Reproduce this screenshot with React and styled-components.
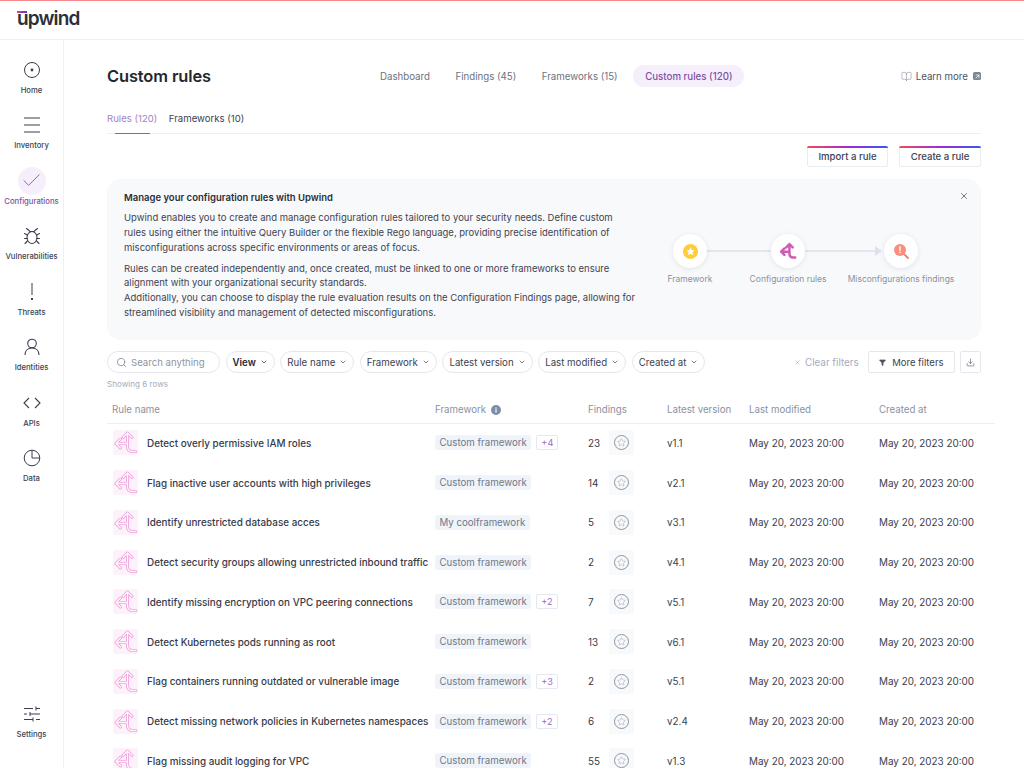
import React from "react";
import styled, { createGlobalStyle } from "styled-components";
import { ChevronDown, Search, X, Star, Filter, Download, BookOpen, ArrowUpRight, Check } from "lucide-react";

const Global = createGlobalStyle`
  html, body { margin: 0; height: 100%; overflow: hidden; background: #fff; }
  body { font-family: Inter, "Liberation Sans", sans-serif; color: #2f3441; -webkit-font-smoothing: antialiased; }
  * { box-sizing: border-box; }
`;
const Page = styled.div`display:flex;flex-direction:column;height:768px;width:1024px;overflow:hidden;`;
const TopBar = styled.header`
  height:40px;flex:none;padding:8px 0 0 17px;border-bottom:1px solid #eef0f5;
  border-top:1px solid #f58a8c;
`;
const Logo = styled.div`position:relative;display:inline-block;font-size:19px;line-height:20px;font-weight:600;letter-spacing:-.85px;color:#2a2f3a;
  &::before{content:"";position:absolute;left:0;top:2px;width:10px;height:2px;background:linear-gradient(90deg,#f0405c,#5a30e0);}
`;
const Body = styled.div`display:flex;flex:1;min-height:0;`;
const Side = styled.nav`width:64px;flex:none;border-right:1px solid #eef1f8;display:flex;flex-direction:column;align-items:center;padding-top:16px;padding-bottom:13px;`;
const NavList = styled.div`display:flex;flex-direction:column;flex:1;width:100%;`;
const NavItem = styled.div`height:55.43px;display:flex;flex-direction:column;align-items:center;color:${p=>p.$active?"#7d4fa6":"#3d4352"};`;
const NavIcon = styled.div`width:28px;height:28px;border-radius:50%;display:flex;align-items:center;justify-content:center;background:${p=>p.$active?"#f5effc":"transparent"};color:${p=>p.$active?"#8a62b4":"#3a3f4c"};`;
const NavLabel = styled.span`font-size:7.7px;line-height:12px;margin-top:1px;font-weight:500;white-space:nowrap;`;
const Main = styled.main`flex:1;min-width:0;padding:0 43px;`;
const Head = styled.div`display:flex;align-items:center;height:22px;margin-top:25px;`;
const Title = styled.h1`margin:0;width:261px;font-size:16.4px;line-height:22px;font-weight:600;color:#23272f;letter-spacing:-.1px;`;
const TopTabs = styled.div`display:flex;align-items:center;gap:1.5px;flex:1;`;
const TopTab = styled.div`font-size:9.7px;height:22px;line-height:23px;padding:0 12px;border-radius:11px;white-space:nowrap;font-weight:${p=>p.$active?500:400};color:${p=>p.$active?"#7d4fa6":"#6c7280"};background:${p=>p.$active?"#f5effc":"transparent"};${p=>p.$active?"margin-left:2px;":""}`;
const Learn = styled.div`display:flex;align-items:center;gap:4px;font-size:9.7px;color:#4d5360;`;
const SubIcon = styled.span`display:inline-flex;width:8px;height:8px;background:#7f8795;border-radius:1.5px;color:#fff;align-items:center;justify-content:center;margin-left:1px;`;
const SubTabs = styled.div`display:flex;gap:11.5px;height:28px;margin-top:19px;border-bottom:1px solid #eceef3;`;
const SubTab = styled.div`position:relative;font-size:9.6px;padding:7px 0 0;white-space:nowrap;color:${p=>p.$active?"#a384c6":"#3c4150"};
  ${p=>p.$active?`&::after{content:"";position:absolute;left:8px;right:7px;bottom:-1px;height:1px;background:#8a62b4;}`:""}
`;
const Actions = styled.div`display:flex;justify-content:flex-end;gap:11px;margin-top:12px;height:21px;`;
const GradBtn = styled.button`font:500 9.6px Inter,sans-serif;color:#3c4150;background:#fff;height:21px;width:${p=>p.$w}px;padding:0;border:1px solid #e9ecf2;border-top:0;border-radius:3px;position:relative;
  &::before{content:"";position:absolute;left:-1px;right:-1px;top:0;height:1.5px;border-radius:2px 2px 0 0;background:linear-gradient(90deg,#f24b57,#a02ad8,#2f5cf0);}
`;
const Banner = styled.section`position:relative;display:flex;margin-top:12px;height:161px;background:#f8f9fb;border-radius:14px;padding:12px 0 0 17px;`;
const BannerText = styled.div`width:510px;font-size:9.5px;line-height:14.85px;color:#3f4452;`;
const BannerTitle = styled.div`font-weight:600;color:#2a2e38;height:20px;line-height:13px;`;
const Para = styled.p`margin:0 0 6px;white-space:nowrap;`;
const Close = styled.span`position:absolute;right:12px;top:12px;color:#5a6270;display:flex;`;
const Flow = styled.div`position:absolute;left:560px;top:55px;width:296px;height:50px;`;
const FlowLine = styled.div`position:absolute;top:16px;left:${p=>p.$l}px;width:${p=>p.$w}px;height:2px;background:#e2e7ee;`;
const FlowArrow = styled.div`position:absolute;left:208px;top:12px;border-left:7px solid #dbe2ec;border-top:5px solid transparent;border-bottom:5px solid transparent;`;
const FlowNode = styled.div`position:absolute;left:${p=>p.$x}px;top:0;width:0;display:flex;flex-direction:column;align-items:center;`;
const FlowCircle = styled.div`width:34px;height:34px;flex:none;border-radius:50%;background:#fff;box-shadow:0 1px 5px rgba(90,100,130,.15);display:flex;align-items:center;justify-content:center;`;
const FlowLabel = styled.div`margin-top:5px;font-size:8.5px;line-height:12px;color:#8b92a0;white-space:nowrap;`;
const Filters = styled.div`display:flex;align-items:center;gap:5.5px;margin-top:11px;height:22px;`;
const Pill = styled.div`display:flex;align-items:center;height:22px;padding:0 6px;gap:4px;border:1px solid #e4e7ee;border-radius:11px;font-size:9.7px;color:${p=>p.$bold?"#23272f":"#3c4150"};font-weight:${p=>p.$bold?600:400};white-space:nowrap;background:#fff;`;
const SearchBox = styled(Pill)`width:113px;padding:0 8px;gap:4px;font-size:9.6px;color:#8d94a2;`;
const Spacer = styled.div`flex:1;`;
const Clear = styled.div`display:flex;align-items:center;gap:4px;font-size:9.85px;color:#a3adbf;margin-right:4px;`;
const Square = styled.div`display:flex;align-items:center;justify-content:center;gap:6px;height:22px;padding:0 ${p=>p.$icon?"0":"10px"};width:${p=>p.$icon?"21px":"auto"};border:1px solid #e4e7ee;border-radius:2px;font-size:9.5px;color:#3c4150;white-space:nowrap;`;
const Showing = styled.div`font-size:8.1px;color:#a3adbf;margin-top:5px;line-height:12px;`;
const Table = styled.div`margin-top:6px;width:888px;`;
const Row = styled.div`display:grid;grid-template-columns:328px 153px 79px 82px 130px 116px;align-items:center;height:39.75px;padding-bottom:2px;`;
const HeadRow = styled(Row)`height:28px;border-bottom:1px solid #edeff4;padding-bottom:0;font-size:9.7px;color:#8b92a0;`;
const HeadFirst = styled.div`padding-left:5px;`;
const HeadCell = styled.div`display:flex;align-items:center;gap:5px;`;
const NameCell = styled.div`display:flex;align-items:center;gap:9px;padding-left:6px;font-size:9.9px;font-weight:500;color:#363b48;white-space:nowrap;`;
const RuleBox = styled.div`width:25px;height:25px;background:#fdf1fa;border-radius:2px;display:flex;flex:none;`;
const FrameCell = styled.div`display:flex;align-items:center;gap:5px;`;
const Tag = styled.span`font-size:9.7px;line-height:15px;padding:0 4.5px;background:#eff3fa;border-radius:3px;color:#6f7888;white-space:nowrap;`;
const More = styled.span`font-size:9.2px;line-height:13px;padding:0 4px;border:1px solid #e6e8ef;border-radius:2px;color:#9a6cc0;`;
const FindCell = styled.div`display:flex;align-items:center;font-size:9.9px;color:#363b48;`;
const Num = styled.span`width:21px;`;
const StarBox = styled.div`width:25px;height:25px;background:#f8f9fb;border-radius:2px;display:flex;align-items:center;justify-content:center;`;
const StarRing = styled.div`width:15px;height:15px;border:1px solid #8b93a2;border-radius:50%;display:flex;align-items:center;justify-content:center;color:#8b93a2;`;
const Cell = styled.div`font-size:9.9px;color:#3c4150;white-space:nowrap;`;

const ruleD = "M14.500 3V16c0 3.500 2 5.500 5 5.500h3M14.500 13.500H3M7.500 9l-4.500 4.500 4.500 4.500M10 7.500l4.500-4.500 4.500 4.500";
const RuleIcon = () => (
  <svg width="25" height="25" viewBox="0 0 25 25" fill="none" strokeLinejoin="round" strokeLinecap="round">
    <path d={ruleD} stroke="#f2a0dc" strokeWidth="3"/>
    <path d={ruleD} stroke="#fef7fc" strokeWidth="1.300"/>
  </svg>
);
const SolidRule = () => (
  <svg width="18" height="18" viewBox="0 0 25 25" fill="none" stroke="#d05bb5" strokeWidth="3.400" strokeLinejoin="round" strokeLinecap="round">
    <path d={ruleD}/>
  </svg>
);
const StarCoin = () => (
  <svg width="15" height="15" viewBox="0 0 16 16"><circle cx="8" cy="8" r="8" fill="#ffcd38"/><path d="M8 3.800l1.300 2.700 3 .4-2.200 2 .6 3L8 10.400l-2.700 1.500.6-3-2.200-2 3-.4z" fill="#fff"/></svg>
);
const Magnifier = () => (
  <svg width="17" height="17" viewBox="0 0 17 17"><path d="M10.500 10.500l4.500 4.500" stroke="#f0806c" strokeWidth="1.800" strokeLinecap="round"/><circle cx="7" cy="7" r="6" fill="#fa8e7e"/><rect x="6.300" y="3.300" width="1.400" height="4.400" fill="#fff"/><rect x="6.300" y="8.700" width="1.400" height="1.400" fill="#fff"/></svg>
);
const InfoDot = () => (<svg width="10" height="10" viewBox="0 0 10 10"><circle cx="5" cy="5" r="5" fill="#7f8ea8"/><rect x="4.400" y="4.300" width="1.200" height="3.200" fill="#fff"/><rect x="4.400" y="2.500" width="1.200" height="1.200" fill="#fff"/></svg>);
const Dot = () => (<svg width="18" height="18" viewBox="0 0 18 18" fill="none"><circle cx="9" cy="9" r="7.500" stroke="#3a3f4c" strokeWidth="1"/><circle cx="9" cy="9" r="1.400" fill="#3a3f4c"/></svg>);
const Lines = () => (<svg width="18" height="18" viewBox="0 0 18 18" stroke="#3a3f4c" strokeWidth="1"><path d="M1 2h16M1 9h16M1 16h16"/></svg>);
const BugIcon = () => (<svg width="18" height="18" viewBox="0 0 18 18" fill="none" stroke="#3a3f4c" strokeWidth="1.100" strokeLinecap="round"><ellipse cx="9" cy="10.500" rx="5" ry="6"/><path d="M3.500 1.500L7 4.500h4l3.500-3M4.200 8L1.500 6.500M4 11.500H1.500M4.500 14l-2.500 2.500M13.800 8l2.700-1.500M14 11.500h2.500M13.500 14l2.500 2.500"/></svg>);
const Bang = () => (<svg width="6" height="18" viewBox="0 0 6 18" fill="#3a3f4c"><rect x="2.500" y="0" width="1" height="12"/><rect x="2" y="15" width="2" height="2"/></svg>);
const Person = () => (<svg width="18" height="18" viewBox="0 0 18 18" fill="none" stroke="#3a3f4c" strokeWidth="1.100"><circle cx="9" cy="5.500" r="4.300"/><path d="M2 17c0-4.500 3-7 7-7s7 2.500 7 7"/></svg>);
const Code = () => (<svg width="18" height="12" viewBox="0 0 18 12" fill="none" stroke="#3a3f4c" strokeWidth="1.100"><path d="M6 1L1 6l5 5M12 1l5 5-5 5"/></svg>);
const Pie = () => (<svg width="18" height="18" viewBox="0 0 18 18" fill="none" stroke="#3a3f4c" strokeWidth="1"><circle cx="9" cy="9" r="7.800"/><path d="M9 1.200V9h7.800"/></svg>);
const Sliders = () => (<svg width="18" height="16" viewBox="0 0 18 16" fill="none" stroke="#3a3f4c" strokeWidth="1"><path d="M1 2.500h9M13 2.500h4M13 0.500v4M1 8h3M7 8h10M7 6v4M1 13.500h9M13 13.500h4M10 11.500v4"/></svg>);

const nav = [["Home",<Dot/>],["Inventory",<Lines/>],["Configurations",<Check size={23} strokeWidth={1} />,true],["Vulnerabilities",<BugIcon/>],["Threats",<Bang/>],["Identities",<Person/>],["APIs",<Code/>],["Data",<Pie/>]];
const rows = [
  ["Detect overly permissive IAM roles","Custom framework","+4","23","v1.1"],
  ["Flag inactive user accounts with high privileges","Custom framework","","14","v2.1"],
  ["Identify unrestricted database acces","My coolframework","","5","v3.1"],
  ["Detect security groups allowing unrestricted inbound traffic","Custom framework","","2","v4.1"],
  ["Identify missing encryption on VPC peering connections","Custom framework","+2","7","v5.1"],
  ["Detect Kubernetes pods running as root","Custom framework","","13","v6.1"],
  ["Flag containers running outdated or vulnerable image","Custom framework","+3","2","v5.1"],
  ["Detect missing network policies in Kubernetes namespaces","Custom framework","+2","6","v2.4"],
  ["Flag missing audit logging for VPC","Custom framework","","55","v1.3"],
];
const date = "May 20, 2023 20:00";

export default function App() {
  return (
    <Page>
      <Global />
      <TopBar><Logo>upwind</Logo></TopBar>
      <Body>
        <Side>
          <NavList>
            {nav.map(([l,i,a]) => (
              <NavItem key={l} $active={a}><NavIcon $active={a}>{i}</NavIcon><NavLabel>{l}</NavLabel></NavItem>
            ))}
          </NavList>
          <NavItem><NavIcon><Sliders/></NavIcon><NavLabel>Settings</NavLabel></NavItem>
        </Side>
        <Main>
          <Head>
            <Title>Custom rules</Title>
            <TopTabs>
              <TopTab>Dashboard</TopTab><TopTab>Findings (45)</TopTab><TopTab>Frameworks (15)</TopTab><TopTab $active>Custom rules (120)</TopTab>
            </TopTabs>
            <Learn><BookOpen size={11} strokeWidth={1.200} color="#7f8795"/>Learn more<SubIcon><ArrowUpRight size={7} strokeWidth={2.500}/></SubIcon></Learn>
          </Head>
          <SubTabs><SubTab $active>Rules (120)</SubTab><SubTab>Frameworks (10)</SubTab></SubTabs>
          <Actions><GradBtn $w={81}>Import a rule</GradBtn><GradBtn $w={82}>Create a rule</GradBtn></Actions>
          <Banner>
            <BannerText>
              <BannerTitle>Manage your configuration rules with Upwind</BannerTitle>
              <Para>Upwind enables you to create and manage configuration rules tailored to your security needs. Define custom<br/>rules using either the intuitive Query Builder or the flexible Rego language, providing precise identification of<br/>misconfigurations across specific environments or areas of focus.</Para>
              <Para>Rules can be created independently and, once created, must be linked to one or more frameworks to ensure<br/>alignment with your organizational security standards.<br/>Additionally, you can choose to display the rule evaluation results on the Configuration Findings page, allowing for<br/>streamlined visibility and management of detected misconfigurations.</Para>
            </BannerText>
            <Close><X size={10} strokeWidth={2}/></Close>
            <Flow>
              <FlowLine $l={40} $w={64}/><FlowLine $l={138} $w={70}/><FlowArrow/>
              <FlowNode $x={23}><FlowCircle><StarCoin/></FlowCircle><FlowLabel>Framework</FlowLabel></FlowNode>
              <FlowNode $x={121}><FlowCircle><SolidRule/></FlowCircle><FlowLabel>Configuration rules</FlowLabel></FlowNode>
              <FlowNode $x={234}><FlowCircle><Magnifier/></FlowCircle><FlowLabel>Misconfigurations findings</FlowLabel></FlowNode>
            </Flow>
          </Banner>
          <Filters>
            <SearchBox><Search size={11} strokeWidth={1.500} color="#6c7280"/>Search anything</SearchBox>
            <Pill $bold>View<ChevronDown size={8} strokeWidth={2}/></Pill>
            <Pill>Rule name<ChevronDown size={8} strokeWidth={2}/></Pill>
            <Pill>Framework<ChevronDown size={8} strokeWidth={2}/></Pill>
            <Pill>Latest version<ChevronDown size={8} strokeWidth={2}/></Pill>
            <Pill>Last modified<ChevronDown size={8} strokeWidth={2}/></Pill>
            <Pill>Created at<ChevronDown size={8} strokeWidth={2}/></Pill>
            <Spacer/>
            <Clear><X size={7} strokeWidth={2}/>Clear filters</Clear>
            <Square><Filter size={7} fill="#4d5360" color="#4d5360"/>More filters</Square>
            <Square $icon><Download size={9} strokeWidth={2} color="#6c7280"/></Square>
          </Filters>
          <Showing>Showing 6 rows</Showing>
          <Table>
            <HeadRow>
              <HeadFirst>Rule name</HeadFirst>
              <HeadCell>Framework<InfoDot/></HeadCell>
              <HeadCell>Findings</HeadCell><HeadCell>Latest version</HeadCell><HeadCell>Last modified</HeadCell><HeadCell>Created at</HeadCell>
            </HeadRow>
            {rows.map((r,i) => (
              <Row key={i}>
                <NameCell><RuleBox><RuleIcon/></RuleBox>{r[0]}</NameCell>
                <FrameCell><Tag>{r[1]}</Tag>{r[2] && <More>{r[2]}</More>}</FrameCell>
                <FindCell><Num>{r[3]}</Num><StarBox><StarRing><Star size={9} strokeWidth={1.200}/></StarRing></StarBox></FindCell>
                <Cell>{r[4]}</Cell><Cell>{date}</Cell><Cell>{date}</Cell>
              </Row>
            ))}
          </Table>
        </Main>
      </Body>
    </Page>
  );
}
